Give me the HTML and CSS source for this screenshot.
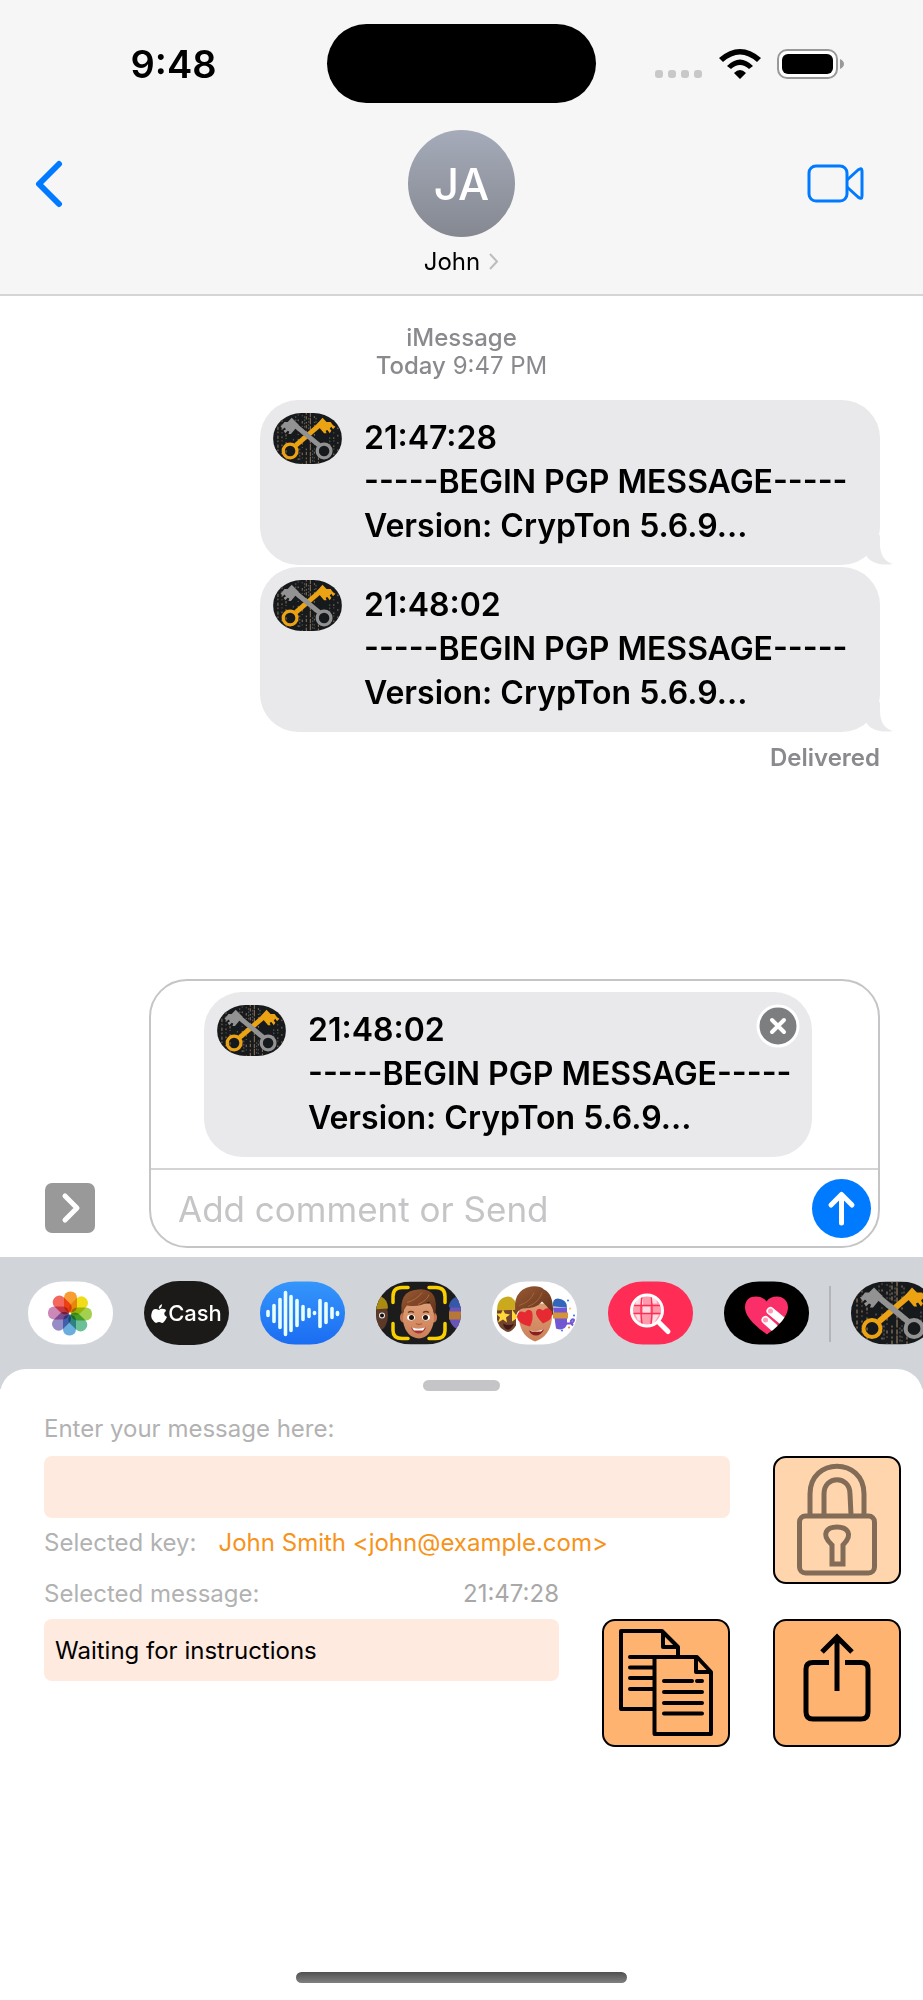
FILE: index.html
```html
<!DOCTYPE html>
<html lang="en">
<head>
<meta charset="utf-8">
<meta name="viewport" content="width=device-width, initial-scale=1">
<title>John</title>
<link rel="stylesheet" href="styles.css">
</head>
<body>
<svg class="defs" width="0" height="0" aria-hidden="true">
  <defs>
    <linearGradient id="wave-bg" x1="0" y1="0" x2="0" y2="1"><stop offset="0" stop-color="#3596fb"/><stop offset="1" stop-color="#1b6cf2"/></linearGradient>
    <linearGradient id="hair" x1="0" y1="0" x2="1" y2="1"><stop offset="0" stop-color="#9a5a33"/><stop offset="1" stop-color="#5f3019"/></linearGradient>
    <linearGradient id="skin" x1="0" y1="0" x2="0" y2="1"><stop offset="0" stop-color="#dd9c74"/><stop offset="1" stop-color="#cb8058"/></linearGradient>
    <clipPath id="capsule"><rect width="85" height="63" rx="35" ry="31"/></clipPath>
    <symbol id="keys" viewBox="0 0 85 63">
      <g clip-path="url(#capsule)">
        <rect width="85" height="63" fill="#171a1c"/>
        <g stroke="#b08b66" stroke-width="1" fill="none">
          <path d="M6 12V60" stroke-dasharray="2 3 4 2"/><path d="M11 4V60" stroke-dasharray="1 4 2 3"/><path d="M16 26V60" stroke-dasharray="3 2 1 4"/>
          <path d="M31 2V60" stroke-dasharray="1 5 2 4"/><path d="M36 0V63" stroke-dasharray="3 3 1 6" stroke-dashoffset="3"/><path d="M41 0V24M41 44V63" stroke-dasharray="2 2 4 3"/>
          <path d="M46 0V63" stroke-dasharray="5 1 8 2"/><path d="M51 4V60" stroke-dasharray="2 5 1 3"/><path d="M56 40V63" stroke-dasharray="3 2"/><path d="M75 24V52" stroke-dasharray="1 5 2 2"/><path d="M80 18V50" stroke-dasharray="2 7"/>
        </g>
        <path d="M25 32V36M28 4V12M39 4V20M44 6V22M53 6V20M70 30V40M33 44V60M49 46V62" stroke="#6b6f70" stroke-dasharray="2 2"/>
        <g stroke="#eba313" fill="none">
          <circle cx="21" cy="47" r="8.500" stroke-width="4"/><path d="M28 40 62 11" stroke-width="6"/>
          <path fill="#eba313" stroke="none" d="M61 6 66 11 71 11 74 15 77 17 74 20 72 17 70 19 72 22 70 25 67 21 65 22 66 25 63 25 58 19 54 14Z"/>
        </g>
        <g stroke="#929292" fill="none">
          <circle cx="63" cy="47" r="8.500" stroke-width="4"/><path d="M22 11 57 40" stroke-width="6"/>
          <path fill="#929292" stroke="none" d="M23 6 18 11 14 11 11 15 9 16 12 20 14 18 16 20 13 22 15 25 18 22 20 23 19 26 22 26 27 20 31 14Z"/>
        </g>
      </g>
    </symbol>
  </defs>
</svg>
<div class="phone">
  <header class="header">
    <div class="status">
      <time class="clock">9:48</time>
      <div class="island"></div>
      <div class="indicators">
        <svg width="48" height="30" viewBox="0 0 48 30" fill="#c8c8c8" aria-hidden="true"><rect y="21" width="8" height="8" rx="3"/><rect x="13" y="21" width="8" height="8" rx="3"/><rect x="26" y="21" width="8" height="8" rx="3"/><rect x="39" y="21" width="8" height="8" rx="3"/></svg>
        <svg class="wifi" width="42" height="30" viewBox="0 0 42 30" aria-label="Wi-Fi"><path d="M21 30 15 24Q21 18 27 24ZM0 9Q21-9 42 9L38 13Q21-2 4 13ZM8 17Q21 4 34 17L30 20Q21 12 12 20Z"/></svg>
        <svg width="68" height="30" viewBox="0 0 68 30" aria-label="Battery full"><rect x="1" y="1" width="59" height="28" rx="9" fill="#fff" stroke="#999" stroke-width="2"/><rect x="5" y="5" width="51" height="20" rx="6"/><path d="M63 10Q67 12 67 15T63 20Z" fill="#999"/></svg>
      </div>
    </div>
    <div class="nav">
      <button class="icon-button" aria-label="Back"><svg width="28" height="48" viewBox="0 0 28 48"><path d="M24 4 4 24 24 44" fill="none" stroke="#007aff" stroke-width="6" stroke-linecap="round" stroke-linejoin="round"/></svg></button>
      <button class="contact"><span class="avatar">JA</span><span class="name">John <svg width="11" height="17" viewBox="0 0 11 17"><path d="M2 1 9 8.500 2 16" fill="none" stroke="#bcbcbe" stroke-width="2"/></svg></span></button>
      <button class="icon-button video" aria-label="Video call"><svg width="58" height="40" viewBox="0 0 58 40" fill="none" stroke="#007aff" stroke-width="3" stroke-linejoin="round"><rect x="2" y="2" width="38" height="35" rx="7"/><path d="M40 16 51 6Q55 3 55 7V32Q55 36 51 33L40 23"/></svg></button>
    </div>
  </header>

  <main class="chat">
    <p class="stamp"><strong>iMessage</strong><br><strong>Today</strong> 9:47 PM</p>
    <div class="messages">
      <article class="bubble"><svg class="keys" width="69" height="51"><use href="#keys"/></svg><p class="text">21:47:28<br>-----BEGIN PGP MESSAGE-----<br>Version: CrypTon 5.6.9...</p><svg class="tail" width="30" height="30" viewBox="0 0 30 30"><path d="M17 0V9C17 20 22 27 30 29C18 31 9 28 4 22L0 10Z"/></svg></article>
      <article class="bubble"><svg class="keys" width="69" height="51"><use href="#keys"/></svg><p class="text">21:48:02<br>-----BEGIN PGP MESSAGE-----<br>Version: CrypTon 5.6.9...</p><svg class="tail" width="30" height="30" viewBox="0 0 30 30"><path d="M17 0V9C17 20 22 27 30 29C18 31 9 28 4 22L0 10Z"/></svg></article>
      <p class="delivered">Delivered</p>
    </div>
  </main>

  <section class="composer">
    <button class="expand" aria-label="Show more"><svg width="50" height="50" viewBox="0 0 50 50"><path d="M20 13 32 25 20 37" fill="none" stroke="#fff" stroke-width="5" stroke-linecap="round" stroke-linejoin="round"/></svg></button>
    <div class="draft">
      <div class="attachment">
        <article class="bubble draft-bubble"><svg class="keys" width="69" height="51"><use href="#keys"/></svg><p class="text">21:48:02<br>-----BEGIN PGP MESSAGE-----<br>Version: CrypTon 5.6.9...</p>
          <button class="remove" aria-label="Remove"><svg width="44" height="44" viewBox="0 0 44 44"><circle cx="22" cy="22" r="20" fill="#7d7e80" stroke="#fff" stroke-width="3"/><path d="M16 16 28 28M28 16 16 28" stroke="#fff" stroke-width="4" stroke-linecap="round"/></svg></button>
        </article>
      </div>
      <div class="comment">
        <input class="comment-input" type="text" placeholder="Add comment or Send" aria-label="Comment">
        <button class="send" aria-label="Send"><svg width="59" height="59" viewBox="0 0 59 59"><path d="M29.500 44V16M19 26 29.500 15.500 40 26" fill="none" stroke="#fff" stroke-width="5" stroke-linecap="round" stroke-linejoin="round"/></svg></button>
      </div>
    </div>
  </section>

  <nav class="apps">
    <button class="app" aria-label="Photos"><svg viewBox="0 0 85 63"><rect width="85" height="63" rx="35" ry="31" fill="#fff"/>
      <g class="petals" transform="translate(42 32)"><rect x="-6" y="-22" width="13" height="21" rx="6" fill="#f7921e"/><rect x="-6" y="-22" width="13" height="21" rx="6" fill="#efd900" transform="rotate(45)"/><rect x="-6" y="-22" width="13" height="21" rx="6" fill="#9acb3c" transform="rotate(90)"/><rect x="-6" y="-22" width="13" height="21" rx="6" fill="#5bb98c" transform="rotate(135)"/><rect x="-6" y="-22" width="13" height="21" rx="6" fill="#5ba5db" transform="rotate(180)"/><rect x="-6" y="-22" width="13" height="21" rx="6" fill="#8d7fc0" transform="rotate(225)"/><rect x="-6" y="-22" width="13" height="21" rx="6" fill="#c77bb0" transform="rotate(270)"/><rect x="-6" y="-22" width="13" height="21" rx="6" fill="#f2564b" transform="rotate(315)"/></g></svg></button>
    <button class="app cash"><svg width="16" height="19" viewBox="0 0 16 19" fill="#fff" aria-hidden="true"><path d="M11 0Q11 4 8 5Q7 2 11 0ZM8 6Q10 4 13 5Q15 5 15 7Q11 10 16 13Q13 19 11 19Q9 18 8 18T5 19Q3 18 1 15Q-1 10 2 6Q4 4 8 6Z"/></svg><span>Cash</span></button>
    <button class="app" aria-label="Audio"><svg viewBox="0 0 85 63"><rect width="85" height="63" rx="35" ry="31" fill="url(#wave-bg)"/><path d="M8 30V34M14 24V40M20 18V46M25.500 11V53M31 15V49M37 19V44M43 25V38M49 28V35M54.500 31V32M60 19V45M66 22V41M72 27V36M77.500 31V33" stroke="#e7ffff" stroke-width="3.600" stroke-linecap="round"/></svg></button>
    <button class="app" aria-label="Memoji"><svg viewBox="0 0 85 63"><g clip-path="url(#capsule)"><rect width="85" height="63" fill="#1d1c1d"/>
      <ellipse cx="3" cy="34" rx="9" ry="15" fill="#5c3929"/><path d="M-4 28Q-3 13 5 15Q12 18 12 27Z" fill="#a98b12"/><circle cx="6" cy="34" r="3" fill="#eee"/><circle cx="6" cy="34" r="2" fill="#111"/>
      <ellipse cx="84" cy="33" rx="11" ry="15" fill="#6955b9"/><path d="M73 24Q76 13 87 16V26H73Z" fill="#3658a7"/><path d="M73 30H87V38H73Z" fill="#b77835"/>
      <ellipse cx="27" cy="36" rx="3" ry="5" fill="#c6764e"/><ellipse cx="58" cy="36" rx="3" ry="5" fill="#c6764e"/>
      <path d="M28 22H57L58 39Q55 56 43 57Q30 56 27 40Z" fill="url(#skin)"/>
      <path d="M26 34Q22 9 42 8Q64 6 59 34L56 26 53 20Q43 26 31 24Q28 27 26 34Z" fill="url(#hair)"/><path d="M31 21Q41 18 46 11M42 23Q52 18 53 13" stroke="#b06b42" fill="none"/>
      <path d="M32 31Q35 29 38 31M47 31Q50 29 53 31" stroke="#6b3d24" stroke-width="1.500" fill="none"/><ellipse cx="35" cy="36" rx="4" ry="3" fill="#fff"/><ellipse cx="50" cy="36" rx="4" ry="3" fill="#fff"/><circle cx="35.500" cy="36" r="2.500" fill="#20140f"/><circle cx="49.500" cy="36" r="2.500" fill="#20140f"/>
      <path d="M40 42Q43 44 46 42" stroke="#b0623e" stroke-width="1.500" fill="none"/><path d="M35 46Q42 48 50 46Q48 52 42 52Q37 51 35 46Z" fill="#a8352f"/><path d="M36 46Q42 48 49 46L47 49H38Z" fill="#fff"/>
      <path d="M17 21V15Q17 6 26 6H32M53 6H60Q69 6 69 15V21M69 42V49Q69 57 60 57H53M32 57H26Q17 57 17 49V42" fill="none" stroke="#f8d000" stroke-width="3.500" stroke-linecap="round"/></g></svg></button>
    <button class="app" aria-label="Stickers"><svg viewBox="0 0 85 63"><rect width="85" height="63" rx="35" ry="31" fill="#fff"/>
      <path d="M5 28H24V44Q19 52 14 50Q6 46 5 38Z" fill="#70442d"/><path d="M5 29Q5 16 16 15Q23 15 26 28Z" fill="#caa91d"/><path d="M11 28 13 32 18 33 14 36 15 41 11 38 6 41 8 36 4 32 9 32ZM20 28 23 32 26 36 20 40Z" fill="#ffd83a"/><path d="M11 42Q17 45 22 42Q19 49 15 48Q12 47 11 42Z" fill="#421817"/>
      <path d="M61 26H75V43Q72 50 64 47Z" fill="#7157d2"/><path d="M61 25Q60 17 66 17Q75 18 75 26Z" fill="#3266ba"/><path d="M61 31H76V37H61Z" fill="#d4943b"/><path d="M65 42H80Q84 37 80 38Q77 40 81 44M66 38V42" stroke="#7157d2" stroke-width="2" fill="none"/><circle cx="76" cy="19" r="1" fill="#2d6bff"/><circle cx="78" cy="27" r="1" fill="#f4c32e"/><circle cx="70" cy="49" r="1" fill="#2d6bff"/><circle cx="77" cy="46" r="1" fill="#f07a32"/><circle cx="82" cy="34" r="1" fill="#2d6bff"/>
      <path d="M27 22H59L60 37Q58 55 43 60Q29 55 27 38Z" fill="url(#skin)"/><path d="M24 34Q19 9 39 5Q48 4 52 8Q62 12 61 34L55 25 50 20Q45 27 31 27Q26 28 24 34Z" fill="url(#hair)"/><path d="M27 24Q39 20 42 11M36 25Q47 21 50 11" stroke="#a5633d" fill="none"/>
      <path d="M38 45Q25 42 25 35Q26 28 33 31Q36 26 40 30Q42 37 38 45ZM51 42Q43 34 44 30Q46 25 51 29Q56 24 60 30Q62 38 51 42Z" fill="#e52a32"/><path d="M37 49Q44 52 52 48Q49 54 44 54Q39 54 37 49Z" fill="#8b1c20"/><path d="M38 49Q44 51 51 48L49 50H40Z" fill="#fff"/></svg></button>
    <button class="app" aria-label="Image search"><svg viewBox="0 0 85 63"><rect width="85" height="63" rx="35" ry="31" fill="#ff2d55"/><circle cx="39" cy="29" r="15" fill="#ff9bad"/><path d="M29 17H35V24H27ZM42 15H48L49 22H43ZM35 25H42V32H35ZM27 32H34V39H30ZM43 33H51L46 42H43Z" fill="#ffdce2"/><path d="M24 24H53M23 32H54M34 14Q32 29 34 43M43 14Q45 29 43 43" stroke="#ff2d55" stroke-width="1.500" fill="none"/><circle cx="39" cy="29" r="15.500" fill="none" stroke="#fff" stroke-width="3"/><path d="M51 41 60 50" stroke="#fff" stroke-width="5" stroke-linecap="round"/></svg></button>
    <button class="app" aria-label="Digital Touch"><svg viewBox="0 0 85 63"><rect width="85" height="63" rx="35" ry="31" fill="#000"/><path d="M43 53C29 43 21 34 21 26C21 18 26 15 32 15Q39 15 42.500 20Q46 15 53 15C59 15 64 19 64 26C64 34 56 44 43 53Z" fill="#fa2f69"/><path d="M46.500 29.500 58 39M41.500 38.500 50 46" stroke="#fff" stroke-width="8" stroke-linecap="round"/><path d="M43 53Q55 45 62 34L70 40 52 58Z" fill="#000"/><circle cx="46.500" cy="29.500" r="2.500" fill="#ff9bb6"/><circle cx="41.500" cy="38.500" r="2.500" fill="#ff9bb6"/></svg></button>
    <span class="divider"></span>
    <button class="app" aria-label="CrypTon"><svg><use href="#keys"/></svg></button>
  </nav>

  <section class="sheet">
    <div class="handle"></div>
    <form class="panel">
      <label class="label" for="entry">Enter your message here:</label>
      <input class="field entry" id="entry" type="text">
      <div class="row key-row"><span>Selected key:</span><button class="key" type="button">John Smith &lt;john@example.com&gt;</button></div>
      <div class="row message-row"><label for="result">Selected message:</label><time>21:47:28</time></div>
      <input class="field result" id="result" type="text" value="Waiting for instructions" readonly>
      <button class="tile lock" type="button" aria-label="Encrypt"><svg viewBox="2 2 124 124" fill="none" stroke="#826c58" stroke-width="5"><rect x="26.500" y="60" width="75" height="57" rx="6"/><path d="M37 59V38C37 1 91 1 91 38V59M51 59V38C51 19 77 19 77 38L78 59M59 108V89C47 78 54 71 64 71S81 78 70 89V108Z"/></svg></button>
      <button class="tile copy" type="button" aria-label="Copy"><svg viewBox="2 2 124 124" fill="none" stroke="#000" stroke-width="4" stroke-linejoin="round"><path d="M51 90H19V12H60L76 28V37"/><path d="M61 12V28H76"/><path d="M28 38H52M28 48.500H52M28 59H52M28 70H52" stroke-linecap="round"/><path d="M52.500 38H95L109 53V115H52.500ZM94 38V53H109"/><path d="M62 62H90M95 62H100M62 73H100M62 84H100M62 94.500H100" stroke-linecap="round"/></svg></button>
      <button class="tile share" type="button" aria-label="Share"><svg viewBox="2 2 124 124" fill="none" stroke="#000" stroke-width="5"><path d="M56 43.500H40Q33 43.500 33 50V93Q33 100 40 100H88Q95 100 95 93V50Q95 43.500 88 43.500H72"/><path d="M64 72V18M49 33 64 18 79 33"/></svg></button>
    </form>
    <div class="home"></div>
  </section>
</div>
</body>
</html>
```

FILE: styles.css
```css
* { box-sizing: border-box; }
body { margin: 0; background: #fff; color: #000; font-family: Inter, "Liberation Sans", sans-serif; font-size: 24px; }
p { margin: 0; }
button { padding: 0; border: 0; background: none; color: inherit; font: inherit; }
svg { display: block; }
.defs { position: absolute; }
.phone { display: flex; flex-direction: column; min-height: 100vh; overflow: hidden; }

.header { background: #f6f6f6; border-bottom: 2px solid #d5d5d6; padding-bottom: 17px; }
.status { display: grid; grid-template-columns: 1fr 269px 1fr; align-items: center; padding-top: 24px; }
.clock { text-align: center; padding-left: 20px; font-size: 38px; font-weight: 600; line-height: 48px; }
.island { height: 79px; border-radius: 40px; background: #000; }
.indicators { display: flex; justify-content: center; gap: 16px; padding-right: 20px; }
.nav { display: grid; grid-template-columns: 1fr auto 1fr; align-items: start; padding: 27px 58px 0 35px; }
.icon-button { justify-self: start; margin-top: 30px; }
.video { justify-self: end; margin-top: 34px; }
.contact { display: flex; flex-direction: column; align-items: center; gap: 9px; margin-left: 23px; }
.avatar { display: grid; place-items: center; width: 107px; height: 107px; border-radius: 50%; background: linear-gradient(#a5abb9, #858891); color: #fff; font-size: 44px; font-weight: 500; }
.name { display: flex; align-items: center; gap: 8px; line-height: 31px; }

.chat { min-height: 683px; padding: 28px 43px 0 260px; }
.stamp { margin: 0 -43px 20px -260px; text-align: center; color: #8a8a8e; line-height: 28px; }
.stamp strong { font-weight: 500; }
.messages { display: flex; flex-direction: column; gap: 2px; }
.bubble { position: relative; display: flex; gap: 22px; min-height: 165px; padding: 13px; border-radius: 38px; background: #e9e9eb; }
.keys { flex: none; }
.text { padding-top: 3px; font-size: 32px; font-weight: 600; line-height: 44px; white-space: nowrap; }
.tail { position: absolute; right: -13px; bottom: 0; fill: #e9e9eb; }
.delivered { margin-top: 10px; text-align: right; color: #8a8a8e; font-weight: 600; line-height: 28px; }

.composer { display: flex; align-items: flex-end; gap: 54px; padding: 0 43px 9px 45px; }
.expand { margin-bottom: 15px; border-radius: 7px; background: #999; }
.draft { flex: 1; border: 2px solid #c5c5c7; border-radius: 38px; }
.attachment { padding: 11px 66px 11px 53px; border-bottom: 2px solid #d4d4d6; }
.remove { position: absolute; top: 12px; right: 12px; }
.comment { display: flex; align-items: center; padding: 9px 7px 8px 27px; }
.comment-input { flex: 1; min-width: 0; padding: 0; border: 0; outline: 0; background: none; font: inherit; font-size: 35px; }
.comment-input::placeholder { color: #c5c5c7; opacity: 1; }
.send { border-radius: 50%; background: #007aff; }

.apps { display: flex; gap: 31px; padding: 24px 0 44px 28px; margin-bottom: -20px; background: #d1d4d9; overflow: hidden; }
.app { flex: none; width: 85px; height: 64px; }
.app svg { width: 85px; height: 64px; }
.petals rect { mix-blend-mode: multiply; opacity: 0.9; }
.cash { display: flex; align-items: center; justify-content: center; gap: 1px; border-radius: 35px / 32px; background: #1b1a19; color: #fff; font-size: 22px; font-weight: 500; }
.app.cash svg { width: 16px; height: 19px; }
.divider { flex: none; width: 2px; height: 56px; margin: 5px -11px 0 -11px; background: #b3b5ba; }

.sheet { flex: 1; display: flex; flex-direction: column; padding: 11px 22px 17px 44px; border-radius: 26px 26px 0 0; background: #fff; }
.handle { align-self: center; width: 77px; height: 11px; margin-right: 22px; margin-bottom: 22px; border-radius: 6px; background: #c5c5c7; }
.panel { display: grid; grid-template-columns: 1fr 128px 128px; grid-template-rows: 43px 62px 50px 51px auto; column-gap: 43px; margin-bottom: auto; padding-bottom: 40px; color: #b2b2b2; }
.label { grid-area: 1 / 1 / 2 / 3; line-height: 32px; }
.field { width: 100%; height: 62px; padding: 0 11px; border: 0; border-radius: 8px; outline: 0; background: #ffeadf; color: #000; font: inherit; }
.entry { grid-area: 2 / 1 / 3 / 3; }
.row { display: flex; align-items: center; line-height: 50px; white-space: nowrap; }
.key-row { grid-area: 3 / 1 / 4 / 3; gap: 22px; }
.key { color: #f7931a; }
.message-row { grid-area: 4 / 1 / 5 / 2; justify-content: space-between; }
.message-row time { color: #a8a8a8; }
.result { grid-area: 5 / 1 / 6 / 2; }
.tile { width: 128px; height: 128px; border: 2px solid #000; border-radius: 13px; background: #ffb370; overflow: hidden; }
.tile svg { width: 100%; height: 100%; }
.lock { grid-area: 2 / 3 / 5 / 4; background: #ffd5ae; }
.copy { grid-area: 5 / 2 / 6 / 3; }
.share { grid-area: 5 / 3 / 6 / 4; }
.home { align-self: center; width: 331px; height: 11px; margin-right: 22px; border-radius: 6px; background: linear-gradient(#505050, #808080); }
```
